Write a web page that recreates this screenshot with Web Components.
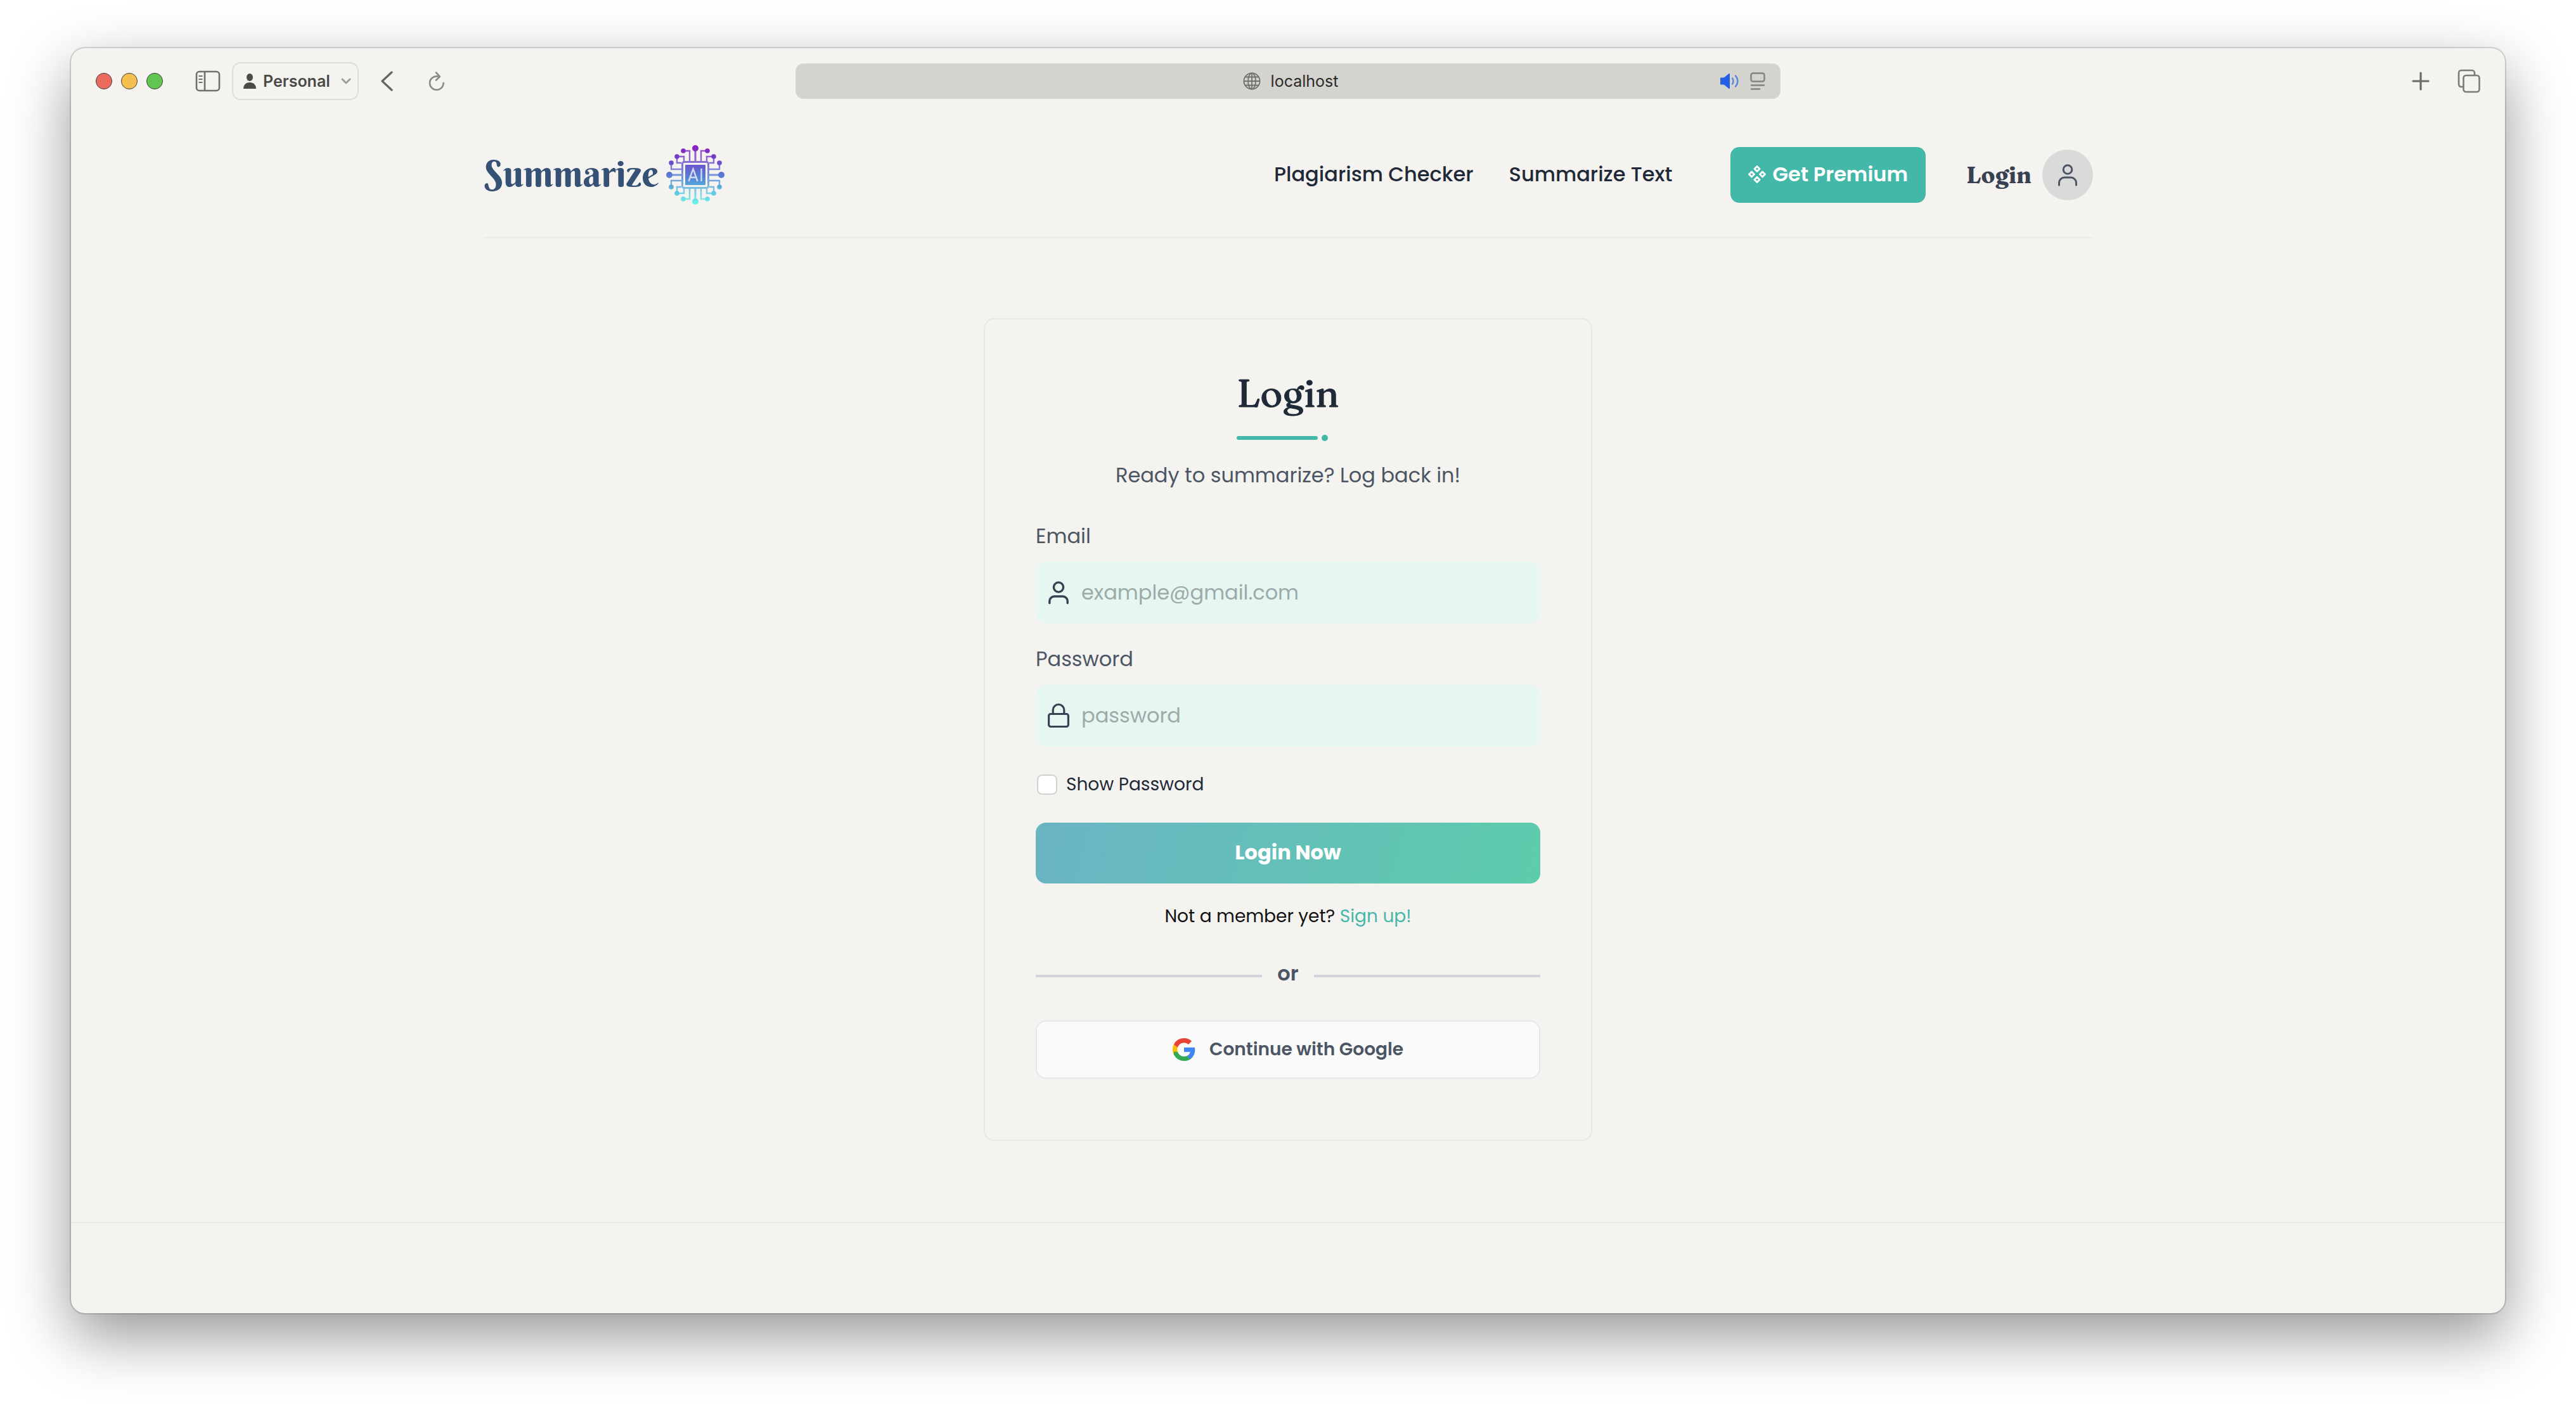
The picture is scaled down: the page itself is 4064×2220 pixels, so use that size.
<!DOCTYPE html>
<html lang="en">
<head>
<meta charset="utf-8">
<title>Summarize AI – Login</title>
<style>
  html { background: #fff; }
  body {
    margin: 0;
    min-height: 100vh;
    box-sizing: border-box;
    padding: 76px 112px 148px;
    display: flex;
    flex-direction: column;
    font-family: Poppins, Inter, "Open Sans", sans-serif;
    color: #1f2937;
  }
</style>
</head>
<body>
<browser-window>
  <browser-toolbar slot="toolbar" profile="Personal" address="localhost"></browser-toolbar>
  <site-header>
    <brand-logo slot="brand">Summarize</brand-logo>
    <nav-link href="#plagiarism">Plagiarism Checker</nav-link>
    <nav-link href="#summarize">Summarize Text</nav-link>
    <premium-button slot="action">Get Premium</premium-button>
    <account-link slot="account" href="#login">Login</account-link>
  </site-header>
  <login-card>
    <card-title slot="title">Login</card-title>
    <span slot="lead">Ready to summarize? Log back in!</span>
    <text-field label="Email" type="email" placeholder="example@gmail.com" icon="user"></text-field>
    <text-field label="Password" type="password" placeholder="password" icon="lock"></text-field>
    <check-field>Show Password</check-field>
    <submit-button>Login Now</submit-button>
    <signup-hint href="#signup" action="Sign up!">Not a member yet?</signup-hint>
    <or-divider>or</or-divider>
    <google-button>Continue with Google</google-button>
  </login-card>
  <site-footer slot="footer"></site-footer>
</browser-window>

<script>
const define = (name, render) => customElements.define(name, class extends HTMLElement {
  constructor() {
    super();
    this.attachShadow({ mode: 'open' });
  }
  connectedCallback() {
    this.shadowRoot.innerHTML = render(this);
  }
});

const RESET = `
  *, *::before, *::after { box-sizing: border-box; }
  button, input { font: inherit; color: inherit; margin: 0; }
  button { cursor: pointer; }
  a { color: inherit; text-decoration: none; }
  svg { display: block; flex: none; }
`;

const ICONS = {
  user: `<svg width="36" height="40" viewBox="0 0 36 40" fill="none" stroke="#374151" stroke-width="3.4" stroke-linecap="round"><circle cx="18" cy="11.5" r="7.6"/><path d="M3.8 36.5V33.5a7.5 7.5 0 0 1 7.5-7.5h13.4a7.5 7.5 0 0 1 7.5 7.5v3"/></svg>`,
  lock: `<svg width="36" height="40" viewBox="0 0 36 40" fill="none" stroke="#374151" stroke-width="3.2" stroke-linejoin="round"><rect x="2.6" y="17.5" width="30.8" height="20" rx="3"/><path d="M9.2 17.5v-6.2a8.8 8.8 0 0 1 17.6 0v6.2"/></svg>`
};

define('browser-window', () => `
  <style>${RESET}
    :host {
      flex: 1;
      display: flex;
      flex-direction: column;
      background: #f5f3ef;
      border-radius: 22px;
      box-shadow: 0 0 0 2px rgba(0,0,0,.14), 0 36px 96px rgba(0,0,0,.42);
    }
    main { flex: 1; }
  </style>
  <slot name="toolbar"></slot>
  <main><slot></slot></main>
  <slot name="footer"></slot>
`);

define('browser-toolbar', el => `
  <style>${RESET}
    :host {
      display: grid;
      grid-template-columns: 1fr minmax(0, 1554px) 1fr;
      align-items: center;
      height: 104px;
      padding: 0 39px;
      font: 400 25px/32px Inter, "Open Sans", sans-serif;
      color: #3c3c3a;
    }
    .left, .lights, .right, .address, .profile { display: flex; align-items: center; }
    .lights { gap: 14px; margin-right: 51px; }
    .lights i { width: 26px; height: 26px; border-radius: 50%; border: 1px solid; }
    .red { background: #ed6a5e; border-color: #d1584d; }
    .amber { background: #f5bf4f; border-color: #d6a243; }
    .green { background: #61c554; border-color: #52a842; }
    button { border: 0; padding: 0; background: none; }
    .profile {
      gap: 11px;
      height: 60px;
      margin: 0 34px 0 18px;
      padding: 0 10px 0 16px;
      border: 2px solid #deddd9;
      border-radius: 14px;
      font-weight: 600;
      color: #4a4a48;
    }
    .profile .chevron { margin-left: 6px; }
    .reload { margin-left: 56px; }
    .address {
      justify-content: center;
      gap: 16px;
      height: 56px;
      padding-left: 8px;
      border: 1px solid #dbd9d5;
      border-radius: 12px;
      background: #d5d3ce;
      color: #2b2b2a;
      position: relative;
    }
    .tools { position: absolute; right: 23px; display: flex; gap: 18px; align-items: center; }
    .right { justify-content: flex-end; gap: 44px; }
  </style>
  <div class="left">
    <div class="lights"><i class="red"></i><i class="amber"></i><i class="green"></i></div>
    <button aria-label="Sidebar"><svg width="40" height="34" viewBox="0 0 40 34" fill="none" stroke="#71706d" stroke-width="2.6"><rect x="2" y="2" width="36" height="30" rx="4.5"/><path d="M15 2v30"/><path d="M5.5 9h6M5.5 14h6M5.5 19h6" stroke-width="2"/></svg></button>
    <button class="profile">
      <svg width="20" height="24" viewBox="0 0 20 24" fill="#4a4a48"><ellipse cx="10" cy="6" rx="5" ry="6"/><path d="M0 24c0-6 4-10 10-10s10 4 10 10z"/></svg>
      <span>${el.getAttribute('profile')}</span>
      <svg class="chevron" width="16" height="12" viewBox="0 0 16 12" fill="none" stroke="#9a9a9c" stroke-width="2.8" stroke-linecap="round" stroke-linejoin="round"><path d="M2 3l6 6 6-6"/></svg>
    </button>
    <button aria-label="Back"><svg width="20" height="32" viewBox="0 0 20 32" fill="none" stroke="#656461" stroke-width="3.2" stroke-linecap="round" stroke-linejoin="round"><path d="M18 2L3 16l15 14"/></svg></button>
    <button class="reload" aria-label="Reload"><svg width="26" height="32" viewBox="0 0 26 32" fill="none" stroke="#8a8986" stroke-width="2.6" stroke-linecap="round" stroke-linejoin="round"><path d="M15 8.500C7.500 7.500 2 12.500 2 19a10.800 10.800 0 0 0 21.600 0"/><path d="M12 2.500L18 8.800 12 14.500"/></svg></button>
  </div>
  <div class="address">
    <svg width="28" height="28" viewBox="0 0 28 28" fill="none" stroke="#72716e" stroke-width="1.8"><circle cx="14" cy="14" r="12.6"/><ellipse cx="14" cy="14" rx="6" ry="12.6"/><path d="M14 1.400v25.200M1.400 14h25.200M3.800 7.500h20.400M3.800 20.500h20.400"/></svg>
    <span>${el.getAttribute('address')}</span>
    <span class="tools">
      <svg width="30" height="26" viewBox="0 0 30 26" fill="none" stroke="#5b84e0" stroke-width="2.4" stroke-linecap="round"><path d="M2 8.500h5L15 2v22l-8-6.500H2z" fill="#2560e4" stroke="#2560e4" stroke-width="2" stroke-linejoin="round"/><path d="M20 8.500c2 2.500 2 6.500 0 9M25 4.500c4.500 5 4.500 12 0 17"/></svg>
      <svg width="24" height="28" viewBox="0 0 24 28" fill="none" stroke="#83827f" stroke-width="2.4" stroke-linecap="round"><rect x="1.500" y="1.500" width="21" height="13" rx="3"/><path d="M2 20.500h20M2 26.500h13"/></svg>
    </span>
  </div>
  <div class="right">
    <button aria-label="New tab"><svg width="28" height="30" viewBox="0 0 28 30" stroke="#6b6a67" stroke-width="3.2" stroke-linecap="round"><path d="M14 2v26M2 15h24"/></svg></button>
    <button aria-label="Tab overview"><svg width="36" height="38" viewBox="0 0 36 38" fill="none" stroke="#7b7a77" stroke-width="2.6"><path d="M9 28H6a4 4 0 0 1-4-4V6a4 4 0 0 1 4-4h17a4 4 0 0 1 4 4v3"/><rect x="9.500" y="10" width="25" height="26" rx="4"/></svg></button>
  </div>
`);

define('site-header', () => `
  <style>${RESET}
    :host { display: block; padding: 0 64px; }
    header {
      max-width: 2540px;
      margin: 0 auto;
      padding: 48px 0 50px;
      border-bottom: 2px solid #edebe8;
      display: flex;
      align-items: center;
      justify-content: space-between;
    }
    .side, nav { display: flex; align-items: center; }
    .side { min-height: 96px; }
    nav { gap: 56px; margin-right: 92px; }
    slot[name="account"] { display: block; margin-left: 64px; }
  </style>
  <header>
    <slot name="brand"></slot>
    <div class="side">
      <nav><slot></slot></nav>
      <slot name="action"></slot>
      <slot name="account"></slot>
    </div>
  </header>
`);

/* One quadrant's traces, mirrored to the other three around the chip centre. */
define('brand-logo', () => {
  const traces = `<path d="M-9 -22V-38H-19M-18 -22V-29H-29V-19H-22M-22 -9H-38V-18"/>`;
  const dots = `<circle cx="-19" cy="-38" r="3.8"/><circle cx="-29" cy="-29" r="3.8"/><circle cx="-38" cy="-19" r="3.8"/>`;
  const mirrored = s => ['1 1', '-1 1', '1 -1', '-1 -1'].map(m => `<g transform="scale(${m})">${s}</g>`).join('');
  return `
  <style>${RESET}
    :host { display: block; }
    a { display: flex; align-items: center; gap: 12px; padding-left: 2px; }
    .word {
      display: block;
      padding-bottom: 4px;
      font: 400 58px/80px "Berkshire Swash", "Liberation Serif", serif;
      color: #365176;
    }
  </style>
  <a href="#home">
    <span class="word"><slot></slot></span>
    <svg width="92" height="94" viewBox="-46 -47 92 94" role="img" aria-label="AI chip">
      <defs>
        <linearGradient id="g" gradientUnits="userSpaceOnUse" x1="0" y1="-46" x2="0" y2="46">
          <stop offset="0" stop-color="#8b1fc0"/><stop offset=".3" stop-color="#6a50cc"/>
          <stop offset=".55" stop-color="#5484d6"/><stop offset=".8" stop-color="#5cc8e2"/><stop offset="1" stop-color="#70f3e8"/>
        </linearGradient>
        <mask id="m" maskUnits="userSpaceOnUse" x="-46" y="-47" width="92" height="94">
          <g fill="none" stroke="#fff" stroke-width="2.4" opacity=".8">${mirrored(traces)}<path d="M0 -42V-22M0 42V22M-41 0H-22M41 0H22" stroke-width="3"/></g>
          <g fill="#fff">${mirrored(dots)}<circle cy="-42" r="5"/><circle cy="42" r="5"/><circle cx="-41" r="5"/><circle cx="41" r="5"/><rect x="-16" y="-16" width="32" height="32" rx="1"/></g>
          <rect x="-20.500" y="-20.500" width="41" height="41" rx="3" fill="none" stroke="#fff" stroke-width="3" opacity=".8"/>
          <path d="M-10.500 10L-3.500 -9.500L3.500 10M-8 4H1M9.500 -10V10" fill="none" stroke="#000" stroke-width="2.4" opacity=".8"/>
        </mask>
      </defs>
      <rect x="-46" y="-47" width="92" height="94" fill="url(#g)" mask="url(#m)"/>
    </svg>
  </a>`;
});

define('nav-link', el => `
  <style>${RESET}
    :host { display: block; font-size: 32px; line-height: 48px; font-weight: 500; white-space: nowrap; }
    a { display: block; padding-bottom: 2px; }
  </style>
  <a href="${el.getAttribute('href')}"><slot></slot></a>
`);

define('premium-button', () => `
  <style>${RESET}
    :host { display: block; }
    button {
      display: flex;
      align-items: center;
      gap: 10px;
      height: 88px;
      padding: 0 28px 2px;
      border: 0;
      border-radius: 14px;
      background: #44b8a8;
      color: #fff;
      font-size: 32px;
      font-weight: 600;
      white-space: nowrap;
    }
  </style>
  <button>
    <svg width="28" height="28" viewBox="1 1 28 28" fill="none" stroke="#fff" stroke-width="2.8" stroke-linejoin="round"><path d="M15 2.500l4 4-4 4-4-4zM15 19.500l4 4-4 4-4-4zM6.500 11l4 4-4 4-4-4zM23.500 11l4 4-4 4-4-4z"/></svg>
    <span><slot></slot></span>
  </button>
`);

define('account-link', el => `
  <style>${RESET}
    :host { display: block; }
    a {
      display: flex;
      align-items: center;
      gap: 17px;
      font: 700 36px/48px Fraunces, "Liberation Serif", serif;
      color: #374151;
    }
    .avatar {
      display: grid;
      place-items: center;
      width: 80px;
      height: 80px;
      border-radius: 50%;
      background: #dadada;
    }
  </style>
  <a href="${el.getAttribute('href')}">
    <span><slot></slot></span>
    <span class="avatar"><svg width="32" height="36" viewBox="0 0 32 36" fill="none" stroke="#4b5563" stroke-width="3" stroke-linecap="round"><circle cx="16" cy="9.500" r="6.8"/><path d="M2.500 34v-3.500A8.500 8.500 0 0 1 11 22h10a8.500 8.500 0 0 1 8.500 8.500V34"/></svg></span>
  </a>
`);

define('login-card', () => `
  <style>${RESET}
    :host { display: block; padding: 126px 32px 128px; }
    form {
      display: flex;
      flex-direction: column;
      max-width: 960px;
      margin: 0 auto;
      padding: 80px 80px 96px;
      border: 2px solid #e8e7e8;
      border-radius: 16px;
    }
    p {
      margin: 30px 0 16px;
      font-size: 32px;
      line-height: 48px;
      text-align: center;
      color: #4b5563;
    }
  </style>
  <form>
    <slot name="title"></slot>
    <p><slot name="lead"></slot></p>
    <slot></slot>
  </form>
`);

define('card-title', () => `
  <style>${RESET}
    :host { display: block; width: max-content; align-self: center; }
    h1 {
      margin: 0 0 30px;
      font: 500 60px/72px Fraunces, "Liberation Serif", serif;
      -webkit-text-stroke: 1px #1f2937;
      color: #1f2937;
    }
    .rule { display: flex; align-items: center; gap: 6px; }
    .rule i { width: 128px; height: 6px; border-radius: 3px; background: #44b8a8; }
    .rule i + i { width: 10px; height: 10px; border-radius: 50%; }
  </style>
  <h1><slot></slot></h1>
  <div class="rule"><i></i><i></i></div>
`);

define('text-field', el => `
  <style>${RESET}
    :host { display: block; margin-top: 32px; font-size: 32px; line-height: 48px; }
    label { display: block; margin-bottom: 16px; color: #4b5563; }
    .box {
      display: flex;
      align-items: center;
      gap: 18px;
      height: 98px;
      padding: 0 18px;
      border-radius: 16px;
      background: #e6f7f1;
    }
    input {
      flex: 1;
      min-width: 0;
      height: 100%;
      padding: 0;
      border: 0;
      outline: 0;
      background: none;
    }
    input::placeholder { color: #9daaaa; opacity: 1; }
  </style>
  <label for="field">${el.getAttribute('label')}</label>
  <div class="box">
    ${ICONS[el.getAttribute('icon')]}
    <input id="field" type="${el.getAttribute('type')}" placeholder="${el.getAttribute('placeholder')}">
  </div>
`);

define('check-field', () => `
  <style>${RESET}
    :host { display: block; margin-top: 40px; font-size: 28px; line-height: 40px; }
    label { display: flex; align-items: center; gap: 14px; width: max-content; }
    input {
      appearance: none;
      width: 32px;
      height: 32px;
      margin-left: 2px;
      border: 2px solid #d2d1cf;
      border-radius: 8px;
      background: #fff;
    }
  </style>
  <label><input type="checkbox"><span><slot></slot></span></label>
`);

define('submit-button', () => `
  <style>${RESET}
    :host { display: block; margin-top: 40px; }
    button {
      display: block;
      width: 100%;
      height: 96px;
      padding: 0 0 2px;
      border: 0;
      border-radius: 16px;
      background: linear-gradient(105deg, #6ab4c4, #64c0b8 50%, #5dccac);
      color: #fff;
      font-size: 32px;
      font-weight: 700;
    }
  </style>
  <button type="button"><slot></slot></button>
`);

define('signup-hint', el => `
  <style>${RESET}
    :host { display: block; margin-top: 32px; font-size: 28px; line-height: 40px; text-align: center; color: #111; }
    a { color: #44b8a8; }
  </style>
  <slot></slot> <a href="${el.getAttribute('href')}">${el.getAttribute('action')}</a>
`);

define('or-divider', () => `
  <style>${RESET}
    :host {
      display: flex;
      align-items: center;
      gap: 24px;
      margin-top: 46px;
      font-size: 32px;
      line-height: 48px;
      font-weight: 600;
      color: #4b5563;
    }
    i { flex: 1; height: 4px; background: #d1d5db; }
    span { padding-bottom: 8px; }
  </style>
  <i></i><span><slot></slot></span><i></i>
`);

define('google-button', () => `
  <style>${RESET}
    :host { display: block; margin-top: 42px; }
    button {
      display: flex;
      align-items: center;
      justify-content: center;
      gap: 22px;
      width: 100%;
      height: 92px;
      padding: 0;
      border: 2px solid #e5e7eb;
      border-radius: 16px;
      background: #fafafa;
      color: #4b5563;
      font-size: 28px;
      font-weight: 600;
    }
  </style>
  <button type="button">
    <svg width="36" height="36" viewBox="2 2 44 44"><path fill="#fbbc05" d="M11.700 28.200A13.200 13.200 0 0 1 11.700 19.800V14.100H4.300a22 22 0 0 0 0 19.800z"/><path fill="#34a853" d="M24 46c5.900 0 10.900-2 14.600-5.300l-7.100-5.500c-2 1.300-4.500 2.100-7.500 2.100-5.700 0-10.600-3.900-12.300-9.100H4.300v5.700A22 22 0 0 0 24 46z"/><path fill="#4285f4" d="M45.100 24.500c0-1.600-.1-3.100-.4-4.500H24v8.500h11.800c-.5 2.700-2.100 5.100-4.400 6.700v5.500h7.100c4.200-3.900 6.600-9.500 6.600-16.200z"/><path fill="#ea4335" d="M24 10.800c3.200 0 6.100 1.100 8.400 3.300l6.300-6.300C34.900 4.200 29.900 2 24 2A22 22 0 0 0 4.300 14.100l7.400 5.700c1.700-5.200 6.600-9 12.300-9z"/></svg>
    <span><slot></slot></span>
  </button>
`);

define('site-footer', () => `
  <style>
    :host { display: block; height: 144px; box-sizing: border-box; border-top: 2px solid #e8e7e8; }
  </style>
  <footer></footer>
`);
</script>
</body>
</html>
